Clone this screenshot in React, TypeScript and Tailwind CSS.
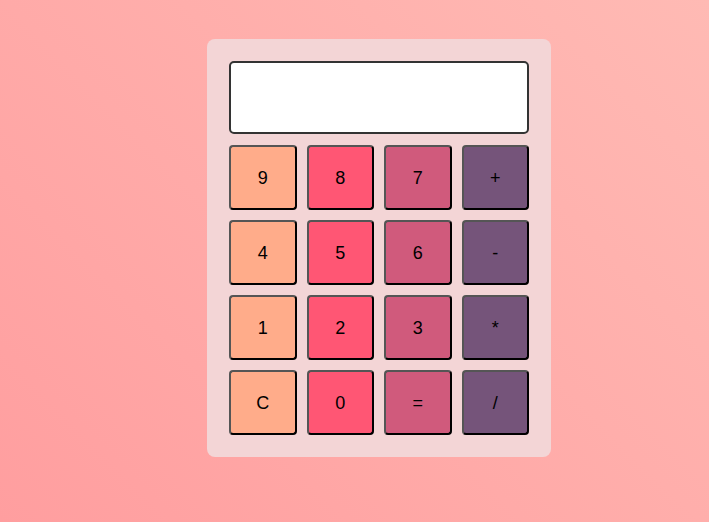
import React from 'react';

const rows = [
  ['9', '8', '7', '+'],
  ['4', '5', '6', '-'],
  ['1', '2', '3', '*'],
  ['C', '0', '=', '/'],
];

const colors = ['bg-[#ffac8a]', 'bg-[#ff5674]', 'bg-[#d05a7c]', 'bg-[#75547a]'];

export default function App() {
  return (
    <div className="w-[709px] h-[522px] bg-[linear-gradient(45deg,#ff9e9f,#ffbab4)] pt-[39px] pl-[207px] font-['Liberation_Sans',Arial,sans-serif]">
      <div className="w-[344px] h-[418px] rounded-lg bg-[#f3d5d6] p-[22px]">
        <div className="h-[73px] w-full rounded-[5px] border-2 border-[#333] bg-white" />
        <div className="mt-[11px] grid grid-cols-4 gap-[10px]">
          {rows.flat().map((k, i) => (
            <button
              key={k}
              className={`h-[65px] rounded-[4px] border-2 border-t-[#555] border-l-[#555] border-b-black border-r-black text-lg text-black ${colors[i % 4]}`}
            >
              {k}
            </button>
          ))}
        </div>
      </div>
    </div>
  );
}
